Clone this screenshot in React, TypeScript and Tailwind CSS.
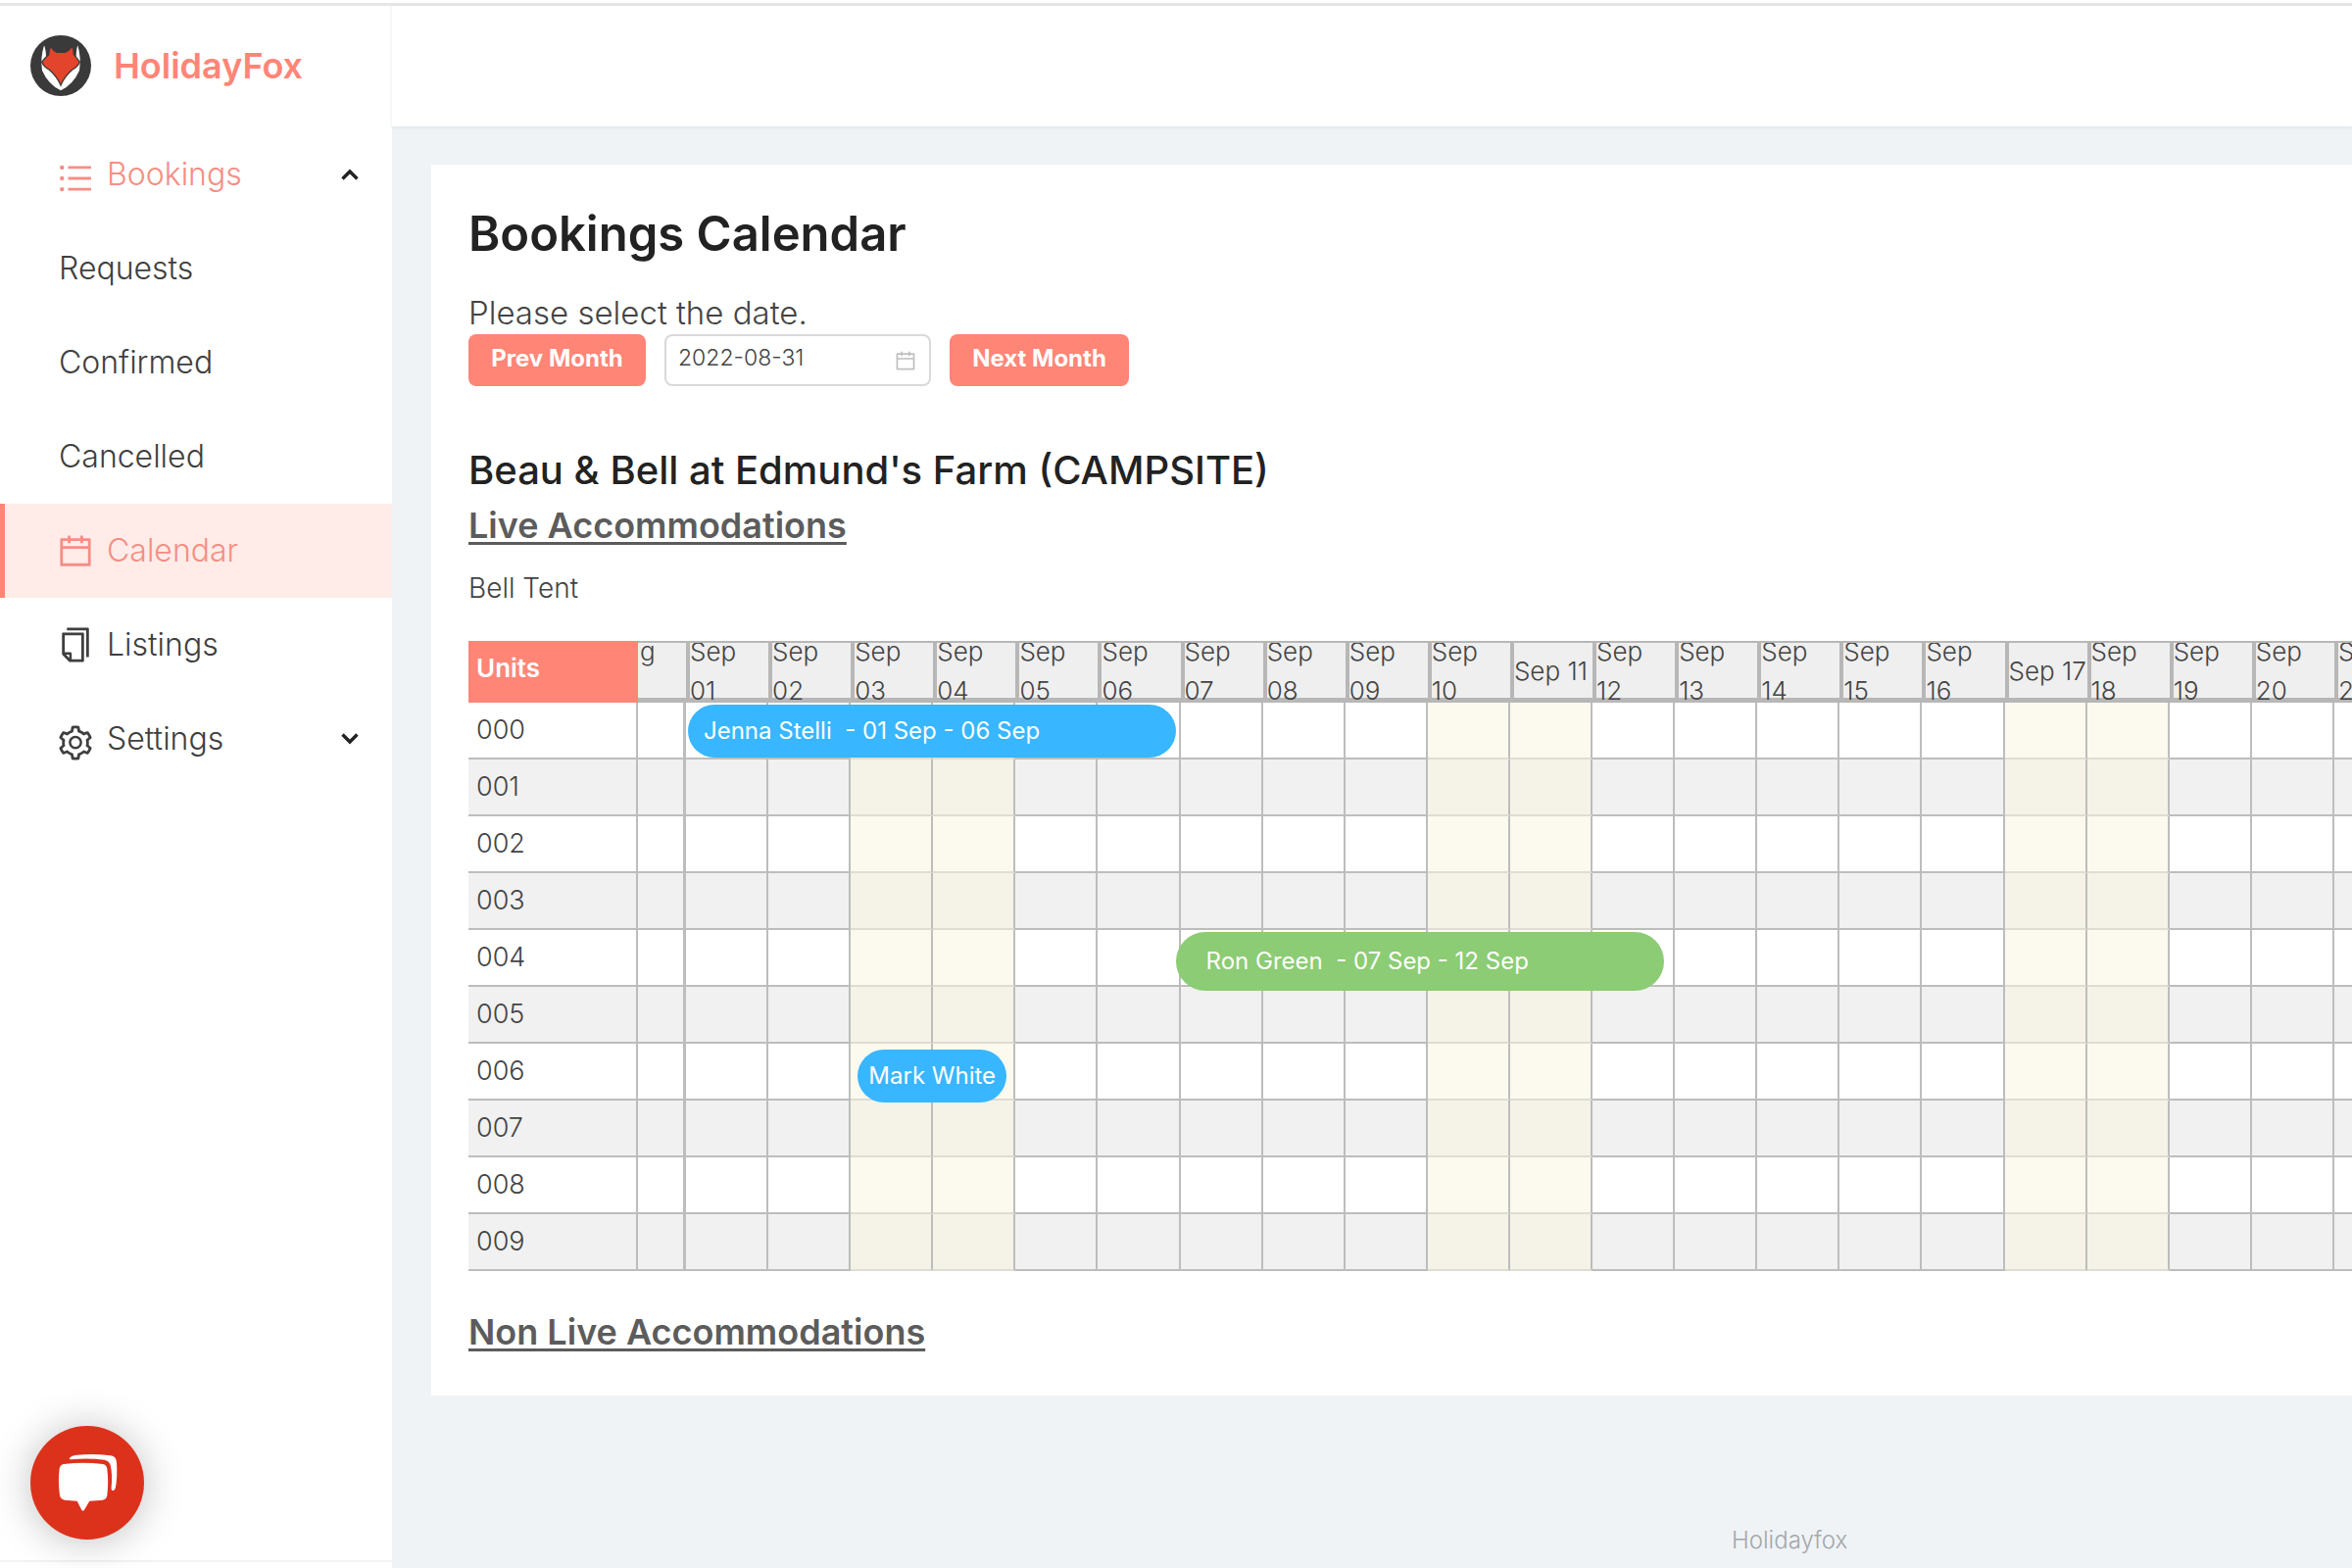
import React from 'react';
import { AiOutlineCalendar, AiOutlineCopy, AiOutlineSetting, AiOutlineUnorderedList } from 'react-icons/ai';

interface Booking {
  unit: string;
  day: number;
  label: string;
  className: string;
}

const UNITS = ['000', '001', '002', '003', '004', '005', '006', '007', '008', '009'];
const DAYS = Array.from({ length: 21 }, (_, i) => i + 1);
const WEEKEND = [3, 4, 10, 11, 17, 18];
const SINGLE_LINE = [11, 17];

const BOOKINGS: Booking[] = [
  { unit: '000', day: 1, label: 'Jenna Stelli  - 01 Sep - 06 Sep', className: 'top-[2px] left-[2px] h-[54px] w-[498px] pl-4 bg-[#38b6ff]' },
  { unit: '004', day: 7, label: 'Ron Green  - 07 Sep - 12 Sep', className: 'top-[2px] -left-[5px] h-[60px] w-[498px] pl-[31px] bg-[#8ccc74]' },
  { unit: '006', day: 3, label: 'Mark White', className: 'top-[6px] left-[7px] h-[54px] w-[152px] justify-center bg-[#38b6ff]' },
];

const Chevron: React.FC<{ up?: boolean }> = ({ up }) => (
  <svg viewBox="0 0 18 12" className="ml-auto h-3 w-[18px]" fill="none" stroke="#222" strokeWidth="3.4">
    <path d={up ? 'M1.5 10.5 9 3l7.5 7.5' : 'M1.5 1.5 9 9l7.5-7.5'} />
  </svg>
);

const FoxLogo = () => (
  <svg viewBox="20 17 186 186" className="size-[62px]">
    <circle cx="113" cy="110" r="93" fill="#3a3a3a" />
    <path d="M62 48Q50 85 56 125Q75 168 113 186Q151 168 170 125Q176 85 165 48Q160 62 160 86L113 165L68 86Q68 62 62 48Z" fill="#fff" />
    <path
      d="M82 50Q90 65 102 69H126Q138 65 148 50Q154 62 153 76Q162 86 171 99Q165 114 149 122Q125 142 113 170Q101 142 77 122Q61 114 55 99Q64 86 76 76Q76 62 82 50Z"
      fill="#e2452b"
      stroke="#3a3a3a"
      strokeWidth="4"
    />
  </svg>
);

const ChatIcon = () => (
  <svg viewBox="-57 -75 348 348" className="size-full" fill="#fff">
    <path d="M62 25Q64 17 85 14Q135 9 190 16Q205 18 207 36Q210 80 204 112Q202 124 194 123Q190 122 191 112Q195 75 188 45Q184 32 170 29Q120 22 66 28Z" />
    <path d="M45 42Q105 34 165 42Q176 44 178 56Q183 97 178 138Q176 150 164 152L124 155L108 182Q104 187 100 182L86 155L48 152Q36 150 33 138Q27 97 32 56Q34 44 45 42Z" />
  </svg>
);

interface NavItemProps {
  label: string;
  icon?: React.ReactNode;
  active?: boolean;
  accent?: boolean;
  chevron?: 'up' | 'down';
}

const NavItem: React.FC<NavItemProps> = ({ label, icon, active, accent, chevron }) => (
  <li>
    <a
      href="#"
      className={`flex h-24 items-center pr-[34px] text-[32px] font-light ${active ? 'border-l-[5px] border-[#ff8577] bg-[#ffece8] pl-[55px]' : 'pl-[60px]'} ${active || accent ? 'text-[#f58e85]' : 'text-[#3f3f3f]'}`}
    >
      {icon && <span className={`-ml-[3px] mr-3 ${chevron ? 'pt-2' : ''}`}>{icon}</span>}
      <span>{label}</span>
      {chevron && <Chevron up={chevron === 'up'} />}
    </a>
  </li>
);

const HeaderCell: React.FC<{ children: React.ReactNode }> = ({ children }) => (
  <div className="flex h-[63px] items-center overflow-hidden border-t-2 border-[#b7b7b7] bg-[#efefef] pb-1 leading-10 shadow-[inset_0_-5px_0_#b7b7b7]">
    <div>{children}</div>
  </div>
);

const CalendarTable = () => (
  <table className="w-[1988px] table-fixed border-separate border-spacing-0 text-left text-[26px] font-light text-[#444]">
    <colgroup>
      <col className="w-[173px]" />
      <col className="w-[49px]" />
      {DAYS.map((day) => (
        <col key={day} />
      ))}
    </colgroup>
    <thead>
      <tr>
        <th className="bg-[#ff8577] p-0 pb-2 pl-2 font-semibold text-white">Units</th>
        <th className="p-0 font-light">
          <HeaderCell>
            <span className="pl-[2px]">g</span>
            <br />
            &nbsp;
          </HeaderCell>
        </th>
        {DAYS.map((day) => {
          const num = String(day).padStart(2, '0');
          return (
            <th key={day} className="p-0 font-light">
              <div className="border-l-4 border-[#b7b7b7]">
                <HeaderCell>
                  {SINGLE_LINE.includes(day) ? <span className="whitespace-nowrap">Sep {num}</span> : <>Sep<br />{num}</>}
                </HeaderCell>
              </div>
            </th>
          );
        })}
      </tr>
    </thead>
    <tbody>
      {UNITS.map((unit, row) => (
        <tr key={unit} className={row % 2 ? 'bg-[#f1f1f1]' : 'bg-white'}>
          <th className="h-[58px] border-r-2 border-b-2 border-[#bdbdbd] p-0 pl-2 text-[27px] font-light">{unit}</th>
          <td className="border-r-[3px] border-b-2 border-[#bdbdbd] p-0" />
          {DAYS.map((day) => {
            const booking = BOOKINGS.find((b) => b.unit === unit && b.day === day);
            return (
              <td
                key={day}
                className={`relative border-r-2 border-b-2 border-r-[#bdbdbd] p-0 ${WEEKEND.includes(day) ? 'border-b-[#dfdcd2] bg-[#f9f5df]/50' : 'border-b-[#bdbdbd]'}`}
              >
                {booking && (
                  <div className={`absolute z-10 flex items-center rounded-full text-2xl font-normal whitespace-pre text-white ${booking.className}`}>
                    {booking.label}
                  </div>
                )}
              </td>
            );
          })}
        </tr>
      ))}
    </tbody>
  </table>
);

export default function App() {
  return (
    <div className="flex min-h-screen flex-col overflow-hidden bg-[#eff3f6] font-[Inter,sans-serif]">
      <div className="h-[6px] border-t-[3px] border-b-[3px] border-t-white border-b-[#e6e6e6] bg-white" />
      <div className="flex flex-1">
        <aside className="relative flex w-[400px] shrink-0 flex-col bg-white">
          <div className="flex h-[124px] items-center gap-[23px] border-r-2 border-[#f8f8f8] pb-[2px] pl-[31px]">
            <FoxLogo />
            <span className="text-[36px] font-semibold text-[#ff8577]">HolidayFox</span>
          </div>
          <nav>
            <ul>
              <NavItem label="Bookings" accent chevron="up" icon={<AiOutlineUnorderedList size={40} />} />
              <NavItem label="Requests" />
              <NavItem label="Confirmed" />
              <NavItem label="Cancelled" />
              <NavItem label="Calendar" active icon={<AiOutlineCalendar size={40} />} />
              <NavItem label="Listings" icon={<AiOutlineCopy size={40} />} />
              <NavItem label="Settings" chevron="down" icon={<AiOutlineSetting size={40} />} />
            </ul>
          </nav>
          <div className="mt-auto h-2 border-t-2 border-[#f2f2f2]" />
          <button
            type="button"
            aria-label="Chat"
            className="absolute bottom-[29px] left-[31px] size-[116px] rounded-full bg-[#dc321c] shadow-[0_2px_40px_rgba(0,0,0,0.25)]"
          >
            <ChatIcon />
          </button>
        </aside>

        <div className="flex min-w-0 flex-1 flex-col">
          <header className="h-[123px] bg-white shadow-[0_1px_4px_rgba(0,21,41,0.08)]" />
          <main className="mt-[39px] ml-10 overflow-hidden bg-white pt-9 pb-[37px] pl-[38px]">
            <h1 className="text-[49px] leading-[70px] font-semibold text-[#222]">Bookings Calendar</h1>
            <label htmlFor="date" className="mt-6 block text-[33px] leading-[43px] font-light text-[#444]">
              Please select the date.
            </label>
            <div className="flex gap-[19px]">
              <button type="button" className="h-[53px] w-[181px] rounded-lg bg-[#ff8577] pb-1 text-[24px] font-bold text-white">
                Prev Month
              </button>
              <div className="flex h-[53px] w-[272px] items-center rounded-lg border-2 border-[#d9d9d9] px-3">
                <input id="date" type="text" defaultValue="2022-08-31" className="min-w-0 flex-1 pb-1 text-[23px] font-light text-[#444]" />
                <AiOutlineCalendar size={24} className="text-[#bfbfbf]" />
              </div>
              <button type="button" className="h-[53px] w-[183px] rounded-lg bg-[#ff8577] pb-1 text-[24px] font-bold text-white">
                Next Month
              </button>
            </div>
            <h2 className="mt-[58px] text-[40px] leading-[56px] font-medium text-[#222]">Beau &amp; Bell at Edmund's Farm (CAMPSITE)</h2>
            <h3 className="text-[36px] leading-[56px] font-semibold text-[#5c5c5c] underline decoration-[3px] underline-offset-4">Live Accommodations</h3>
            <p className="mt-4 mb-[34px] text-[28px] leading-10 font-light text-[#444]">Bell Tent</p>
            <CalendarTable />
            <h3 className="mt-[34px] text-[36px] leading-[56px] font-semibold text-[#5c5c5c] underline decoration-[3px] underline-offset-4">
              Non Live Accommodations
            </h3>
          </main>
          <footer className="mt-auto pb-[10px] pl-[1367px] text-[24px] leading-9 font-light text-[#a3a7ab]">Holidayfox</footer>
        </div>
      </div>
    </div>
  );
}
